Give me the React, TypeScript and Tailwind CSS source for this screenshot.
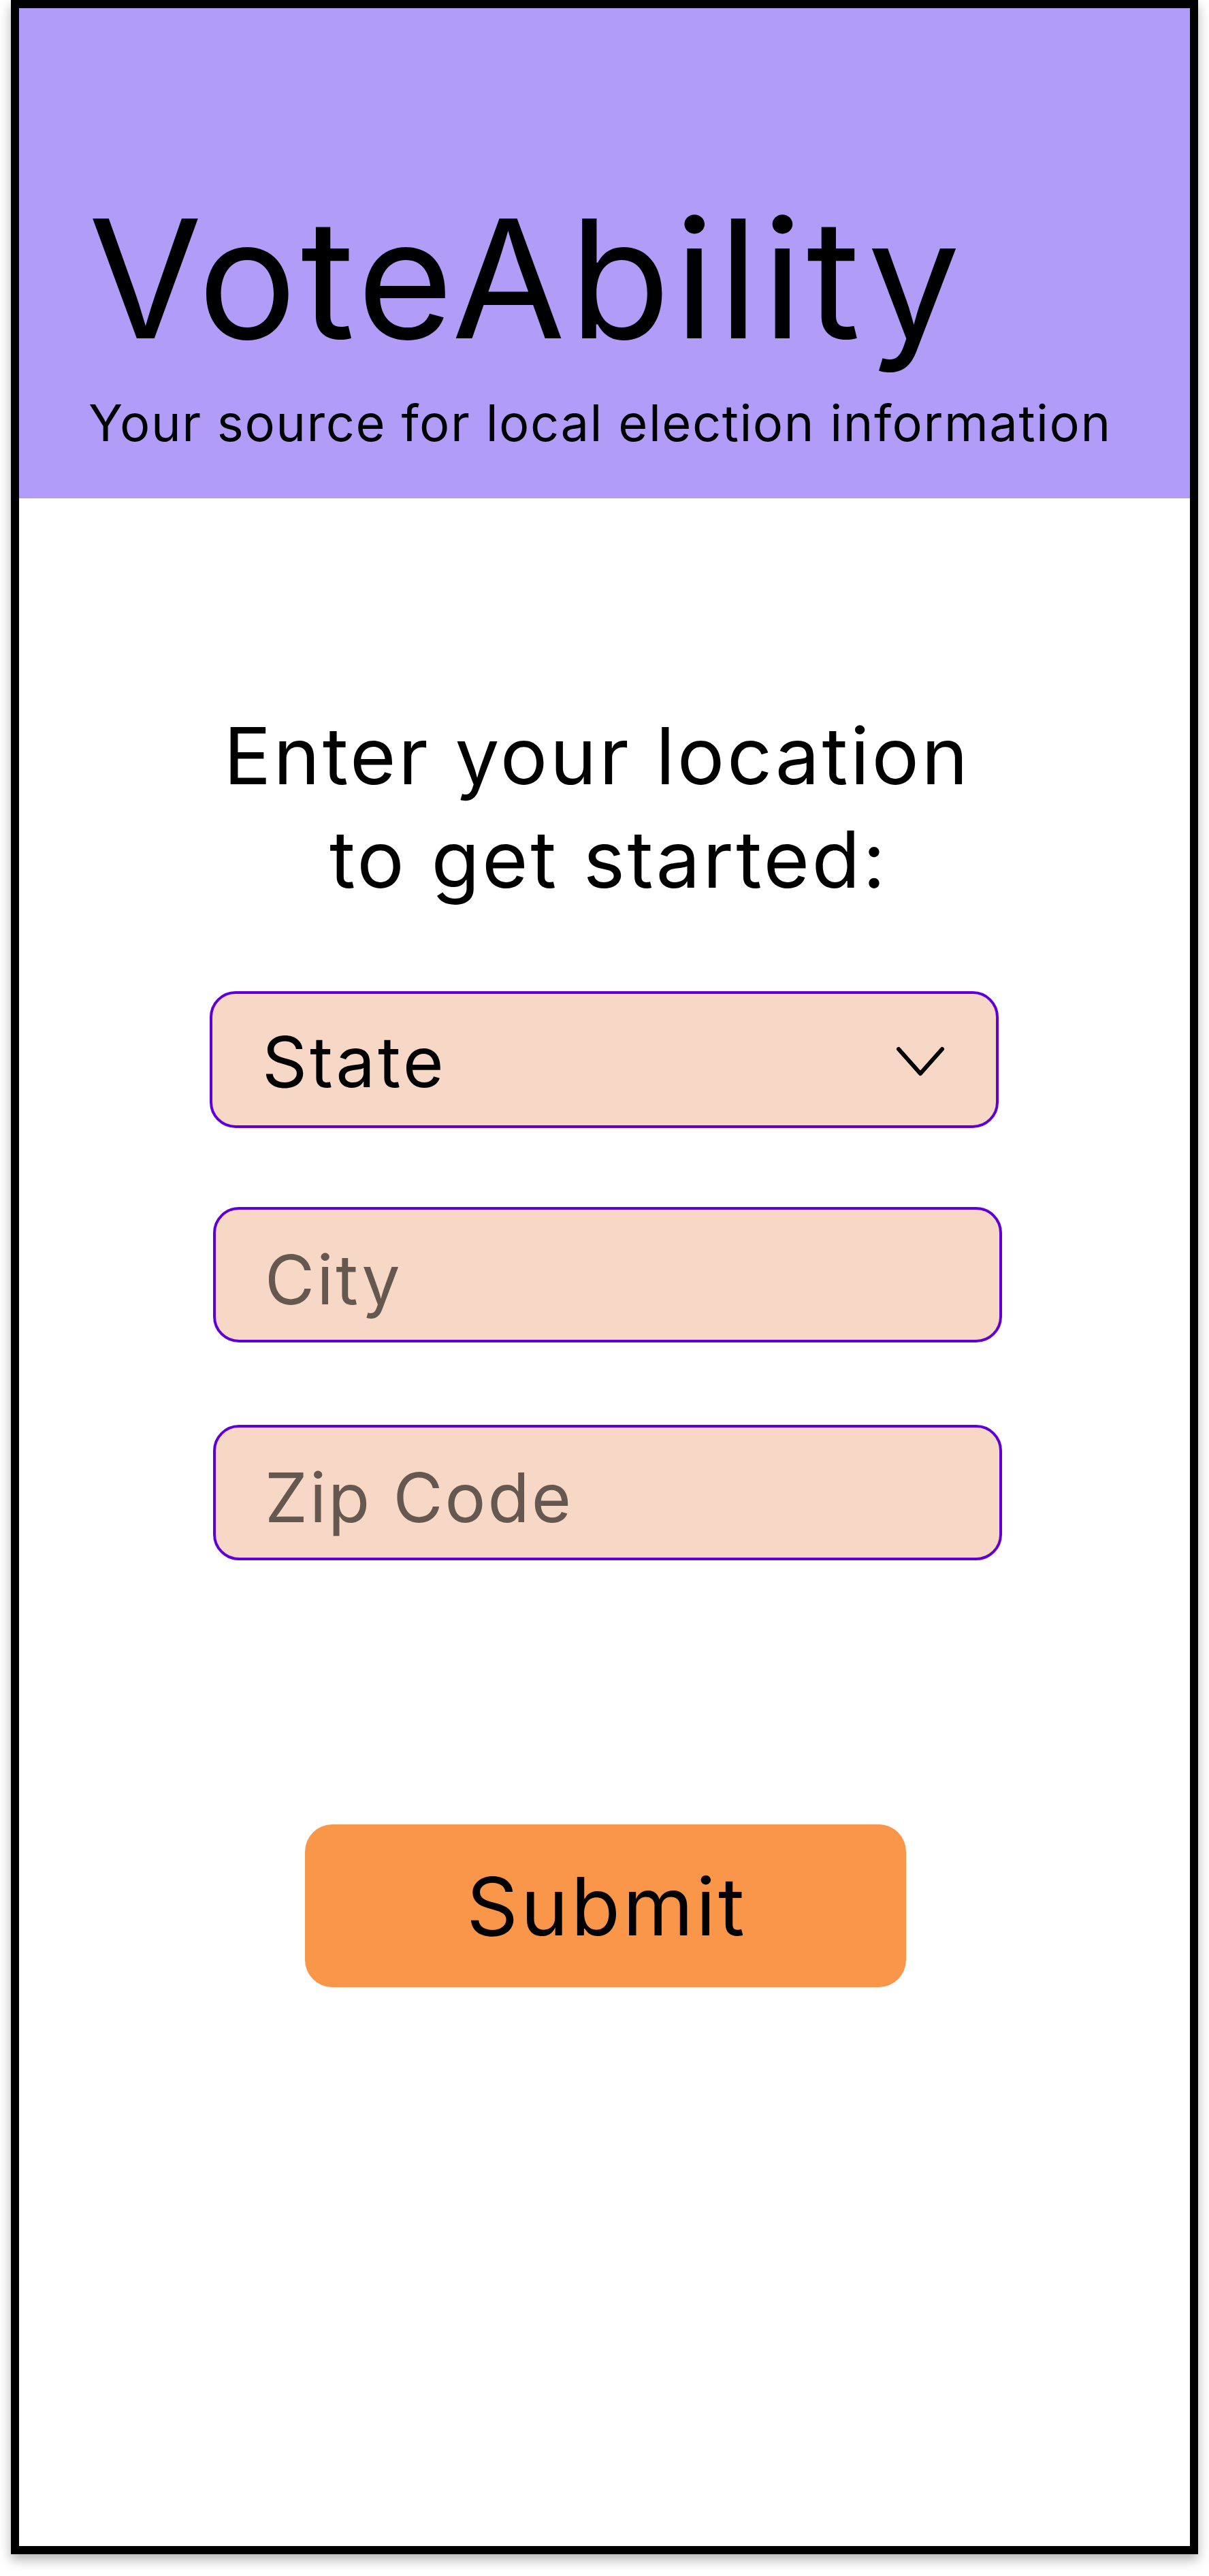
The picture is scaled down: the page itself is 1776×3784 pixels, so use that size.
import { useState, ChangeEvent } from "react";

const Chevron = () => (
  <svg width="72" height="46" viewBox="0 0 72 46" fill="none">
    <path
      d="M4 4 L36 40 L68 4"
      stroke="#000"
      strokeWidth="6"
      strokeLinecap="round"
      strokeLinejoin="round"
    />
  </svg>
);

const App = () => {
  const [city, setCity] = useState("");
  const [zip, setZip] = useState("");

  const handleCity = (e: ChangeEvent<HTMLInputElement>) => setCity(e.target.value);
  const handleZip = (e: ChangeEvent<HTMLInputElement>) => setZip(e.target.value);

  return (
    <div className="min-h-[3784px] bg-white font-[Inter,sans-serif] text-black">
      <div className="ml-[16px] flex h-[3752px] w-[1744px] flex-col border-[12px] border-black bg-white shadow-[0_8px_16px_rgba(0,0,0,0.3)]">
        {/* header */}
        <div className="flex h-[720px] flex-col bg-[#b19df7] pl-[102px] pt-[276px]">
          <h1 className="text-[242px] font-normal leading-none tracking-[6px]">
            VoteAbility
          </h1>
          <p className="mt-[54px] text-[74px] leading-none tracking-[1.5px]">
            Your source for local election information
          </p>
        </div>

        {/* body */}
        <div className="flex flex-col">
          <h2 className="mt-[302px] flex flex-col items-center text-[116px] font-normal leading-[152px] tracking-[3.5px]">
            <span className="mr-[22px]">Enter your location</span>
            <span className="ml-[12px]">to get started:</span>
          </h2>

          <div className="ml-[280px] mt-[118px] flex h-[201px] w-[1159px] items-center justify-between rounded-[38px] border-4 border-[#5f00d7] bg-[#f7d8c6] pl-[73px] pr-[75px] pt-[6px]">
            <span className="text-[103px] leading-none tracking-[4px]">State</span>
            <Chevron />
          </div>

          <input
            className="ml-[285px] mt-[116px] h-[199px] w-[1159px] rounded-[38px] border-4 border-[#5f00d7] bg-[#f7d8c6] pl-[72px] pt-[14px] text-[100px] leading-none tracking-[3.5px] text-black outline-none placeholder:text-[#645850]"
            placeholder="City"
            value={city}
            onChange={handleCity}
          />

          <input
            className="ml-[285px] mt-[121px] h-[199px] w-[1159px] rounded-[38px] border-4 border-[#5f00d7] bg-[#f7d8c6] pl-[72px] pt-[14px] text-[100px] leading-none tracking-[3px] text-black outline-none placeholder:text-[#645850]"
            placeholder="Zip Code"
            value={zip}
            onChange={handleZip}
          />

          <button
            type="submit"
            className="ml-[420px] mt-[388px] flex h-[239px] w-[883px] items-center justify-center rounded-[40px] bg-[#fa964a] pl-[4px] text-[118px] leading-none tracking-[4px]"
          >
            Submit
          </button>
        </div>
      </div>
    </div>
  );
};

export default App;
